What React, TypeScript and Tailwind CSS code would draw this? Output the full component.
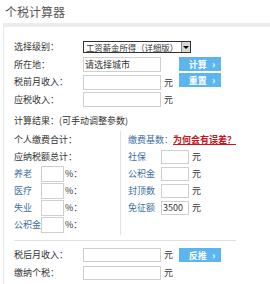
import React from 'react';

const Field: React.FC<{ w: string; h?: string; value?: string }> = ({ w, h = 'h-[15px]', value }) => (
  <div className={`${w} ${h} border border-[#cfcfcf] bg-white flex items-center pl-[1px] text-[#333] shrink-0`}>
    {value}
  </div>
);

const BlueButton: React.FC<{ label: string; extra?: string }> = ({ label, extra = '' }) => (
  <button
    className={`w-[42px] h-[14px] bg-[#5cb5ef] text-white font-bold text-[9px] flex items-center justify-center gap-[5px] leading-none ${extra}`}
  >
    <span className="pl-[4px]">{label}</span>
    <span className="text-[10px]">›</span>
  </button>
);

// left column rows in the result section
const rateRows = ['养老', '医疗', '失业', '公积金'];
const baseRows = [
  { label: '社保', value: '' },
  { label: '公积金', value: '' },
  { label: '封顶数', value: '' },
  { label: '免征额', value: '3500' },
];

const App: React.FC = () => {
  return (
    <div
      className="w-[270px] h-[284px] bg-white overflow-hidden text-[9px] text-[#333]"
      style={{ fontFamily: '"Noto Sans CJK SC", "Noto Sans", sans-serif' }}
    >
      {/* Title */}
      <h1 className="h-[23px] pl-[5px] pt-[4px] text-[12px] leading-[16px] font-normal text-[#555]">个税计算器</h1>

      {/* Panel */}
      <div className="ml-[3px] h-[261px] border-t-[4px] border-l border-t-[#ececec] border-l-[#e8e8e8] pl-[10px] pt-[11px]">
        {/* Select */}
        <div className="h-[18px] flex items-center">
          <span className="w-[69px]">选择级别：</span>
          <div className="w-[108px] h-[12px] border border-[#333] flex items-stretch">
            <span className="flex-1 pl-[2px] leading-[10px] text-[8.4px] whitespace-nowrap overflow-hidden">工资薪金所得（详细版）</span>
            <span className="w-[9px] bg-[#d8d8d8] border-l border-[#888] flex items-center justify-center">
              <span className="w-0 h-0 border-l-[3px] border-r-[3px] border-t-[3px] border-l-transparent border-r-transparent border-t-black" />
            </span>
          </div>
        </div>

        {/* City */}
        <div className="h-[17px] flex items-start">
          <span className="w-[69px] leading-[17px]">所在地：</span>
          <div className="mt-[1px]">
            <Field w="w-[78px]" value="请选择城市" />
          </div>
          <span className="w-[18px]" />
          <BlueButton label="计算" extra="mt-[1px]" />
        </div>

        {/* Pre-tax income */}
        <div className="h-[18px] flex items-start">
          <span className="w-[69px] leading-[18px]">税前月收入：</span>
          <div className="mt-[2px]">
            <Field w="w-[78px]" />
          </div>
          <span className="w-[18px] pl-[3px] leading-[20px]">元</span>
          <BlueButton label="重置" />
        </div>

        {/* Taxable income */}
        <div className="h-[17px] flex items-center">
          <span className="w-[69px]">应税收入：</span>
          <Field w="w-[78px]" />
          <span className="pl-[3px]">元</span>
        </div>

        {/* Result header */}
        <div className="h-[20px] mt-[3px] flex items-center">计算结果：(可手动调整参数)</div>

        {/* Two columns */}
        <div className="flex">
          <div className="w-[107px] border-r border-[#e2e2e2] pb-[2px]">
            <div className="h-[17px] flex items-center">个人缴费合计：</div>
            <div className="h-[17px] flex items-center">应纳税额总计：</div>
            {rateRows.map((r) => (
              <div key={r} className="h-[17px] flex items-center">
                <span className="w-[27px] text-[#3d6fa3] whitespace-nowrap">{r}</span>
                <Field w="w-[23px]" h="h-[16px]" />
                <span className="pl-[1px]">%：</span>
              </div>
            ))}
          </div>
          <div className="pl-[7px]">
            <div className="h-[17px] flex items-center">
              <span className="text-[#3d6fa3]">缴费基数：</span>
              <span className="text-[#c8161d] underline font-bold">为何会有误差？</span>
            </div>
            {baseRows.map((r) => (
              <div key={r.label} className="h-[17px] flex items-center">
                <span className="w-[33px] text-[#3d6fa3]">{r.label}</span>
                <Field w="w-[28px]" h="h-[14px]" value={r.value} />
                <span className="pl-[3px]">元</span>
              </div>
            ))}
          </div>
        </div>

        {/* Divider */}
        <div className="w-[222px] h-px bg-[#e0e0e0] mt-[5px]" />

        {/* After-tax */}
        <div className="h-[18px] mt-[5px] flex items-center">
          <span className="w-[69px]">税后月收入：</span>
          <Field w="w-[78px]" h="h-[14px]" />
          <span className="w-[18px] pl-[3px]">元</span>
          <BlueButton label="反推" />
        </div>
        <div className="h-[18px] flex items-center">
          <span className="w-[69px]">缴纳个税：</span>
          <Field w="w-[78px]" h="h-[14px]" />
          <span className="pl-[3px]">元</span>
        </div>
      </div>
    </div>
  );
};

export default App;
